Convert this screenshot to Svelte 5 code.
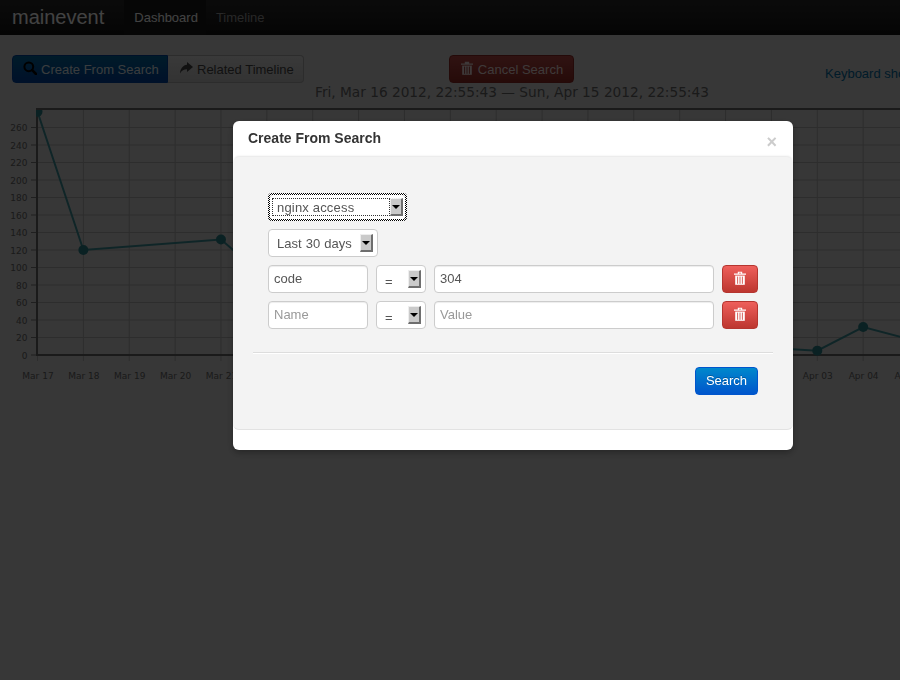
<script lang="ts">
  const yLabels = [0, 20, 40, 60, 80, 100, 120, 140, 160, 180, 200, 220, 240, 260];
  const days = [
    'Mar 17', 'Mar 18', 'Mar 19', 'Mar 20', 'Mar 21', 'Mar 22', 'Mar 23', 'Mar 24', 'Mar 25', 'Mar 26',
    'Mar 27', 'Mar 28', 'Mar 29', 'Mar 30', 'Mar 31', 'Apr 01', 'Apr 02', 'Apr 03', 'Apr 04', 'Apr 05'
  ];
  // days without events have no point, the line just runs past them
  const points = [
    { day: 0, value: 278 },
    { day: 1, value: 120 },
    { day: 4, value: 132 },
    { day: 5, value: 87 },
    { day: 8, value: 40 },
    { day: 12, value: 14 },
    { day: 16, value: 8 },
    { day: 17, value: 5 },
    { day: 18, value: 32 },
    { day: 19, value: 18 }
  ];

  const plotLeft = 37.5;
  const stepX = 45.87;
  const zeroY = 250;
  const stepY = 0.875;

  const xAt = (i: number) => plotLeft + i * stepX;
  const yAt = (v: number) => zeroY - v * stepY;
  const linePoints = points.map((p) => `${xAt(p.day)},${yAt(p.value)}`).join(' ');

  const rows = [
    { name: 'code', value: '304' },
    { name: '', value: '' }
  ];
</script>

<div class="page">
  <nav class="navbar">
    <a class="brand" href="#/">mainevent</a>
    <ul class="nav">
      <li class="active"><a href="#/">Dashboard</a></li>
      <li><a href="#/timeline">Timeline</a></li>
    </ul>
  </nav>

  <div class="toolbar">
    <div class="btn-group">
      <button type="button" class="btn btn-primary">
        <svg viewBox="0 0 14 14" width="14" height="14" aria-hidden="true">
          <circle cx="5.8" cy="5.8" r="4.4" fill="none" stroke="currentColor" stroke-width="2" />
          <path d="M9.2 9.2 L13 13" stroke="currentColor" stroke-width="2.6" stroke-linecap="round" />
        </svg>
        Create From Search
      </button>
      <button type="button" class="btn">
        <svg viewBox="0 0 14 14" width="14" height="14" aria-hidden="true">
          <path d="M8 1 L14 6 L8 11 V8.2 C5 8.2 2.6 9.2 1 12.6 C1.2 7.6 4 4.2 8 3.8 Z" fill="currentColor" />
        </svg>
        Related Timeline
      </button>
    </div>
    <button type="button" class="btn btn-danger cancel">
      <svg viewBox="0 0 14 14" width="14" height="14" aria-hidden="true">
        <path d="M1 2.5 H4.8 V0.8 H9.2 V2.5 H13 V3.8 H1 Z" fill="currentColor" />
        <path d="M2.2 4.6 H11.8 V13.8 H2.2 Z" fill="currentColor" />
        <path d="M4.6 5.6 V12.8 M7 5.6 V12.8 M9.4 5.6 V12.8" stroke="#912a24" stroke-width="0.9" />
      </svg>
      Cancel Search
    </button>
    <a class="shortcuts" href="#/keyboard">Keyboard shortcuts</a>
  </div>

  <h2 class="range">Fri, Mar 16 2012, 22:55:43 — Sun, Apr 15 2012, 22:55:43</h2>

  <svg class="chart" viewBox="0 0 900 280" width="900" height="280" aria-label="Events per day">
    {#each yLabels as v}
      <line class="grid" x1={plotLeft} x2="900" y1={yAt(v)} y2={yAt(v)} />
      <line class="tick" x1="31" x2={plotLeft} y1={yAt(v)} y2={yAt(v)} />
      <text class="y-label" x="27.5" y={yAt(v) + 3.5}>{v}</text>
    {/each}
    {#each days as day, i}
      <line class="grid" x1={xAt(i)} x2={xAt(i)} y1="4" y2={zeroY + 6} />
      <text class="x-label" x={xAt(i) + 0.5} y="274">{day}</text>
    {/each}
    <line class="axis" x1="36" x2="900" y1="4" y2="4" />
    <line class="axis" x1={plotLeft - 0.5} x2={plotLeft - 0.5} y1="3" y2={zeroY + 1} />
    <line class="axis" x1={plotLeft - 1} x2="900" y1={zeroY} y2={zeroY} />
    <clipPath id="plot-clip"><rect x="36" y="5" width="864" height="260" /></clipPath>
    <g clip-path="url(#plot-clip)">
      <polyline class="series" points={linePoints} />
      {#each points as p}
        <circle class="dot" cx={xAt(p.day)} cy={yAt(p.value)} r="5" />
      {/each}
    </g>
  </svg>
</div>

<div class="backdrop"></div>

<div class="modal" role="dialog" aria-labelledby="modal-title">
  <header class="modal-header">
    <h3 id="modal-title">Create From Search</h3>
    <button type="button" class="close" aria-label="Close">×</button>
  </header>

  <div class="modal-body">
    <form class="search-form">
      <label class="select select-parser">
        <select><option>nginx access</option></select>
        <span class="arrow"></span>
      </label>
      <label class="select select-time">
        <select><option>Last 30 days</option></select>
        <span class="arrow"></span>
      </label>
      {#each rows as row}
        <div class="cond">
          <input class="field-name" type="text" placeholder="Name" value={row.name} />
          <label class="select select-op">
            <select><option>=</option></select>
            <span class="arrow"></span>
          </label>
          <input class="field-value" type="text" placeholder="Value" value={row.value} />
          <button type="button" class="btn btn-danger remove" aria-label="Remove condition">
            <svg viewBox="0 0 14 14" width="14" height="14" aria-hidden="true">
              <path d="M1 2.5 H4.8 V0.8 H9.2 V2.5 H13 V3.8 H1 Z M5.9 2.5 H8.1 V1.8 H5.9 Z" fill="#fff" fill-rule="evenodd" />
              <path d="M2.2 4.6 H11.8 V13.8 H2.2 Z" fill="#fff" />
              <path d="M4.6 5.6 V12.8 M7 5.6 V12.8 M9.4 5.6 V12.8" stroke="#d3504b" stroke-width="0.9" />
            </svg>
          </button>
        </div>
      {/each}
    </form>
    <hr />
    <div class="actions">
      <button type="button" class="btn btn-primary search">Search</button>
    </div>
  </div>

  <footer class="modal-footer"></footer>
</div>

<style>
  :global(body) {
    background: #d4d4d4;
    overflow: hidden;
    font-family: 'Liberation Sans', Arial, sans-serif;
    font-size: 13px;
    color: #333;
  }

  .page {
    width: 900px;
    height: 680px;
    overflow: hidden;
  }

  .navbar {
    display: flex;
    align-items: center;
    height: 35px;
    padding-left: 12px;
    background: linear-gradient(#2a2a2a, #141414);
  }

  .brand {
    font-size: 20px;
    color: #fff;
    text-decoration: none;
    margin-right: 20px;
  }

  .nav {
    display: flex;
    list-style: none;
    margin: 0;
    padding: 0;
    height: 100%;
  }

  .nav a {
    display: flex;
    align-items: center;
    height: 100%;
    padding: 0 10px;
    color: #999;
    text-decoration: none;
  }

  .nav .active a {
    padding-right: 8px;
    background: #1a1a1a;
    color: #fff;
  }

  .toolbar {
    display: flex;
    align-items: flex-start;
    padding: 20px 0 0 12px;
    height: 28px;
    white-space: nowrap;
  }

  .toolbar > * {
    flex: none;
  }

  .btn {
    display: inline-flex;
    align-items: center;
    justify-content: center;
    gap: 4px;
    height: 28px;
    padding: 0;
    font-family: inherit;
    font-size: 13px;
    color: #444;
    background: linear-gradient(#dcdcdc, #c4c4c4);
    border: 1px solid #aaa;
    border-radius: 4px;
    cursor: pointer;
  }

  .btn svg {
    margin-bottom: 3px;
  }

  .btn-group {
    display: flex;
  }

  .btn-group .btn {
    justify-content: flex-start;
  }

  .btn-group .btn:first-child {
    width: 156px;
    padding-left: 10px;
    border-radius: 4px 0 0 4px;
  }

  .btn-group .btn:last-child {
    width: 136px;
    padding-left: 11px;
    border-left: 0;
    border-radius: 0 4px 4px 0;
  }

  /* the page under the backdrop uses muted tones, the modal's buttons full ones */
  .btn-primary {
    color: #dfe8ee;
    background: linear-gradient(#00699d, #00419d);
    border-color: #00419d;
  }

  .btn-primary svg {
    color: #000;
  }

  .btn-danger {
    color: #eedcdc;
    background: linear-gradient(#b74946, #912a24);
    border-color: #8b2924;
  }

  .modal .btn-primary {
    color: #fff;
    background: linear-gradient(#0088cc, #0055cc);
    border-color: #0055cc;
    text-shadow: 0 -1px 0 rgb(0 0 0 / 25%);
  }

  .modal .btn-danger {
    color: #fff;
    background: linear-gradient(#ee5f5b, #bd362f);
    border-color: #b5352f;
    text-shadow: 0 -1px 0 rgb(0 0 0 / 25%);
  }

  .cancel {
    width: 125px;
    margin-left: 145px;
  }

  .shortcuts {
    margin-left: 251px;
    margin-top: 11px;
    color: #00699d;
    text-decoration: none;
  }

  .range {
    margin: -1px 0 0 315px;
    height: 20px;
    font-family: 'DejaVu Sans', Verdana, sans-serif;
    font-size: 13.7px;
    font-weight: 400;
    line-height: 20px;
    color: #666;
    white-space: nowrap;
  }

  .chart {
    display: block;
    margin-top: 3px;
  }

  .grid {
    stroke: #acacac;
    stroke-width: 1;
  }

  .tick {
    stroke: #777;
    stroke-width: 1;
  }

  .axis {
    stroke: #666;
    stroke-width: 2;
  }

  .y-label,
  .x-label {
    font-family: 'DejaVu Sans', Verdana, sans-serif;
    font-size: 9px;
    fill: #666;
  }

  .y-label {
    text-anchor: end;
  }

  .x-label {
    text-anchor: middle;
  }

  .series {
    fill: none;
    stroke: #3a9098;
    stroke-width: 2;
  }

  .dot {
    fill: #2a8088;
  }

  .backdrop {
    position: fixed;
    inset: 0;
    background: #000;
    opacity: 0.74;
  }

  .modal {
    position: fixed;
    left: 233px;
    top: 121px;
    width: 560px;
    height: 329px;
    display: flex;
    flex-direction: column;
    background: #fff;
    border-radius: 6px;
    box-shadow: 0 3px 7px rgb(0 0 0 / 30%);
    overflow: hidden;
  }

  .modal-header {
    display: flex;
    align-items: center;
    justify-content: space-between;
    flex: none;
    height: 36px;
    padding: 0 15px;
  }

  .modal-header h3 {
    margin: 0;
    font-size: 14px;
    font-weight: 700;
    color: #333;
    position: relative;
    top: -1px;
  }

  .close {
    border: 0;
    padding: 0;
    background: none;
    font-family: inherit;
    font-size: 18px;
    font-weight: 700;
    line-height: 1;
    color: #ccc;
    position: relative;
    top: 3px;
    left: -1px;
    cursor: pointer;
  }

  .modal-body {
    flex: 1;
    display: flex;
    flex-direction: column;
    padding: 36px 35px 0;
    background: #f3f3f3;
    border-radius: 6px;
    border-bottom: 1px solid #e2e2e2;
    box-shadow: 0 -2px 2px -1px #e6e6e6;
  }

  .search-form {
    display: flex;
    flex-direction: column;
    align-items: flex-start;
    gap: 8px;
  }

  .select {
    display: flex;
    align-items: center;
    box-sizing: border-box;
    height: 28px;
    padding: 0 4px 0 8px;
    background: #fff;
    border: 1px solid #ccc;
    border-radius: 4px;
  }

  .select select {
    flex: 1;
    min-width: 0;
    height: 18px;
    padding: 0;
    border: 0;
    border-radius: 0;
    appearance: none;
    background: transparent;
    font-family: inherit;
    font-size: 13px;
    color: #555;
    outline: none;
  }

  /* focused select: checker-dotted ring, drawn behind a transparent border */
  .select-parser {
    width: 139px;
    padding: 0 2px;
    border: 2px solid transparent;
    background:
      linear-gradient(#fff, #fff) padding-box,
      repeating-conic-gradient(#000 0 25%, #fff 0 50%) 0 0 / 2px 2px border-box;
  }

  .select-parser select {
    border: 1px dotted #333;
    padding-left: 4px;
    letter-spacing: 0.18px;
  }

  .select-time {
    width: 110px;
  }

  .select-time select {
    word-spacing: 0.5px;
  }

  .select-op {
    flex: none;
    width: 50px;
  }

  .select-op select {
    padding-top: 4px;
  }

  .arrow {
    flex: none;
    box-sizing: border-box;
    display: flex;
    align-items: center;
    justify-content: center;
    width: 13px;
    height: 18px;
    background: #cacaca;
    border: 1px solid;
    border-color: #eee #6e6e6e #6e6e6e #eee;
    border-width: 1px 2px 2px 1px;
  }

  .arrow::after {
    content: '';
    border: 4px solid transparent;
    border-top: 4px solid #000;
    border-bottom: 0;
  }

  .cond {
    display: flex;
    gap: 8px;
  }

  .cond input {
    box-sizing: border-box;
    height: 28px;
    padding: 0 5px 2px;
    background: #fff;
    border: 1px solid #ccc;
    border-radius: 4px;
    box-shadow: inset 0 1px 1px rgb(0 0 0 / 7.5%);
    font-family: inherit;
    font-size: 13px;
    color: #555;
  }

  .cond input::placeholder {
    color: #999;
    opacity: 1;
  }

  .field-name {
    width: 100px;
  }

  .field-value {
    width: 280px;
  }

  .remove {
    width: 36px;
  }

  hr {
    width: 520px;
    margin: 23px 0 13px -15px;
    border: 0;
    border-top: 1px solid #ddd;
    border-bottom: 1px solid #fff;
  }

  .actions {
    display: flex;
    justify-content: flex-end;
  }

  .search {
    width: 63px;
    padding-bottom: 2px;
  }

  .modal-footer {
    flex: none;
    height: 20px;
  }
</style>
